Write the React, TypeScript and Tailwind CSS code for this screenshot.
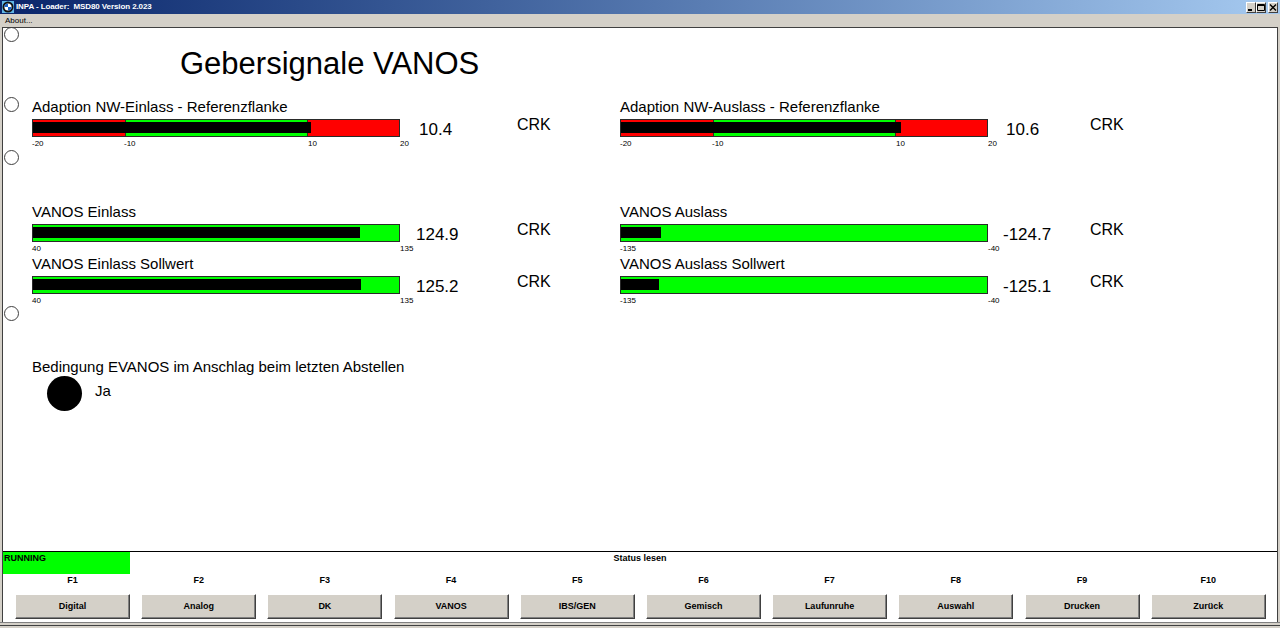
import React from "react"

type Tick = { text: string; cls: string }

type GaugeProps = {
    label: string
    ticks: Tick[]
    fill: number
    adapt?: boolean
    value: string
    valueCls: string
    colCls: string
}

const adaptTicks: Tick[] = [
    { text: "-20", cls: "w-[92px]" },
    { text: "-10", cls: "w-[184px]" },
    { text: "10", cls: "w-[92px]" },
    { text: "20", cls: "" },
]

const einTicks: Tick[] = [
    { text: "40", cls: "w-[368px]" },
    { text: "135", cls: "" },
]

const ausTicks: Tick[] = [
    { text: "-135", cls: "w-[368px]" },
    { text: "-40", cls: "" },
]

const Gauge = ({ label, ticks, fill, adapt, value, valueCls, colCls }: GaugeProps) => (
    <div className="flex items-start">
        <div className="w-[368px] shrink-0">
            <div className="h-[15px] whitespace-nowrap text-[15px] leading-[15px]">{label}</div>
            <div className={`relative mt-[5px] flex h-[18px] border border-[#2a2a2a] ${adapt ? "bg-[#ff0000]" : "bg-[#00ff00]"}`}>
                {adapt && (
                    <>
                        <div className="w-1/4" />
                        <div className="w-1/2 border-x border-[#2a2a2a] bg-[#00ff00]" />
                    </>
                )}
                <div className="absolute left-0 top-[2px] h-[11px] bg-black" style={{ width: `${fill * 100}%` }} />
            </div>
            <div className="mt-[3px] flex h-[8px] text-[8px] leading-[8px]">
                {ticks.map((t) => (
                    <span key={t.text} className={`shrink-0 ${t.cls}`}>{t.text}</span>
                ))}
            </div>
        </div>
        <div className={`mt-[22px] shrink-0 whitespace-nowrap text-[17px] leading-[17px] ${colCls} ${valueCls}`}>{value}</div>
        <div className="mt-[18px] text-[16px] leading-[16px]">CRK</div>
    </div>
)

const keys = [
    ["F1", "Digital"],
    ["F2", "Analog"],
    ["F3", "DK"],
    ["F4", "VANOS"],
    ["F5", "IBS/GEN"],
    ["F6", "Gemisch"],
    ["F7", "Laufunruhe"],
    ["F8", "Auswahl"],
    ["F9", "Drucken"],
    ["F10", "Zurück"],
]

const Logo = () => (
    <svg width="12" height="12" viewBox="0 0 12 12">
        <rect width="12" height="12" fill="#5fb4e6" />
        <circle cx="6" cy="6" r="5.5" fill="#111" />
        <circle cx="6" cy="6" r="3.6" fill="#fff" />
        <path d="M6 6V2.4A3.6 3.6 0 0 0 2.4 6Z" fill="#1c64c8" />
        <path d="M6 6V9.6A3.6 3.6 0 0 0 9.6 6Z" fill="#1c64c8" />
    </svg>
)

const WinBtn = ({ kind }: { kind: "min" | "max" | "close" }) => (
    <div className="flex h-[11px] w-[10px] items-center justify-center border border-t-white border-l-white border-r-[#404040] border-b-[#404040] bg-[#d4d0c8]">
        <svg width="8" height="7" viewBox="0 0 8 7">
            {kind === "min" && <rect x="1" y="5" width="4" height="2" fill="#000" />}
            {kind === "max" && <path d="M0.5 0.5h7v6h-7z M0.5 1.5h7" stroke="#000" fill="none" />}
            {kind === "close" && <path d="M1 0.5l6 6M7 0.5l-6 6" stroke="#000" strokeWidth="1.4" />}
        </svg>
    </div>
)

export default function App() {
    return (
        <div className="flex h-[628px] w-[1280px] flex-col overflow-hidden bg-[#d4d0c8] font-['Liberation_Sans',Arial,sans-serif] text-black">
            {/* title bar */}
            <div className="flex h-[14px] shrink-0 items-center bg-linear-to-r from-[#0a246a] to-[#a6caf0] px-[2px]">
                <Logo />
                <span className="ml-[2px] whitespace-pre text-[8px] font-bold tracking-[-0.1px] text-white">INPA - Loader:  MSD80 Version 2.023</span>
                <div className="ml-auto flex">
                    <WinBtn kind="min" />
                    <WinBtn kind="max" />
                    <div className="ml-[2px]"><WinBtn kind="close" /></div>
                </div>
            </div>

            {/* menu */}
            <div className="flex h-[13px] shrink-0 items-center pl-[5px] text-[8px]">About...</div>

            <div className="mx-[2px] flex h-[595px] shrink-0 flex-col border-x border-t border-[#404040] bg-white">
                <div className="relative h-[523px] shrink-0 overflow-hidden pl-[29px]">
                    <div className="absolute left-[1px] top-[-1px] h-[15px] w-[15px] rounded-full border border-[#404040] bg-white" />
                    <div className="absolute left-[1px] top-[69px] h-[15px] w-[15px] rounded-full border border-[#404040] bg-white" />
                    <div className="absolute left-[1px] top-[122px] h-[15px] w-[15px] rounded-full border border-[#404040] bg-white" />
                    <div className="absolute left-[1px] top-[278px] h-[15px] w-[15px] rounded-full border border-[#404040] bg-white" />

                    <h1 className="ml-[148px] mt-[20px] h-[31px] whitespace-nowrap text-[31px] leading-[31px]">Gebersignale VANOS</h1>

                    <div className="mt-[20px] flex">
                        <div className="w-[588px] shrink-0">
                            <Gauge label="Adaption NW-Einlass - Referenzflanke" ticks={adaptTicks} fill={30.4 / 40} adapt value="10.4" valueCls="pl-[19px]" colCls="w-[117px]" />
                        </div>
                        <Gauge label="Adaption NW-Auslass - Referenzflanke" ticks={adaptTicks} fill={30.6 / 40} adapt value="10.6" valueCls="pl-[18px]" colCls="w-[102px]" />
                    </div>

                    <div className="mt-[56px] flex">
                        <div className="w-[588px] shrink-0">
                            <Gauge label="VANOS Einlass" ticks={einTicks} fill={84.9 / 95} value="124.9" valueCls="pl-[16px]" colCls="w-[117px]" />
                        </div>
                        <Gauge label="VANOS Auslass" ticks={ausTicks} fill={10.3 / 95} value="-124.7" valueCls="pl-[15px]" colCls="w-[102px]" />
                    </div>

                    <div className="mt-[3px] flex">
                        <div className="w-[588px] shrink-0">
                            <Gauge label="VANOS Einlass Sollwert" ticks={einTicks} fill={85.2 / 95} value="125.2" valueCls="pl-[16px]" colCls="w-[117px]" />
                        </div>
                        <Gauge label="VANOS Auslass Sollwert" ticks={ausTicks} fill={9.9 / 95} value="-125.1" valueCls="pl-[15px]" colCls="w-[102px]" />
                    </div>

                    <div className="mt-[54px]">
                        <div className="h-[15px] whitespace-nowrap text-[15px] leading-[15px]">Bedingung EVANOS im Anschlag beim letzten Abstellen</div>
                        <div className="mt-[2px] flex items-start">
                            <div className="ml-[15px] h-[35px] w-[35px] rounded-full bg-black" />
                            <div className="ml-[13px] mt-[7px] text-[15px] leading-[15px]">Ja</div>
                        </div>
                    </div>
                </div>

                {/* status + function keys */}
                <div className="flex h-[72px] shrink-0 flex-col border-t border-black text-[9px] font-bold leading-[9px]">
                    <div className="grid h-[22px] grid-cols-[1fr_auto_1fr]">
                        <div>
                            <div className="h-[22px] w-[127px] bg-[#00ff00] pl-[1px] pt-[2px]">RUNNING</div>
                        </div>
                        <div className="pt-[2px]">Status lesen</div>
                        <div />
                    </div>
                    <div className="mt-[2px] flex h-[9px] gap-[11.2px] pl-[12px]">
                        {keys.map(([f]) => (
                            <div key={f} className="w-[115px] shrink-0 text-center">{f}</div>
                        ))}
                    </div>
                    <div className="mt-[9px] flex gap-[11.2px] pl-[12px]">
                        {keys.map(([f, name]) => (
                            <div key={f} className="flex h-[25px] w-[115px] shrink-0 items-center justify-center border border-t-white border-l-white border-r-[#404040] border-b-[#404040] bg-[#d4d0c8] shadow-[inset_-1px_-1px_0_#808080]">
                                {name}
                            </div>
                        ))}
                    </div>
                </div>
            </div>

            <div className="h-[6px] shrink-0 border-t border-[#808080]">
                <div className="mt-[2px] border-t border-[#404040]" />
            </div>
        </div>
    )
}
